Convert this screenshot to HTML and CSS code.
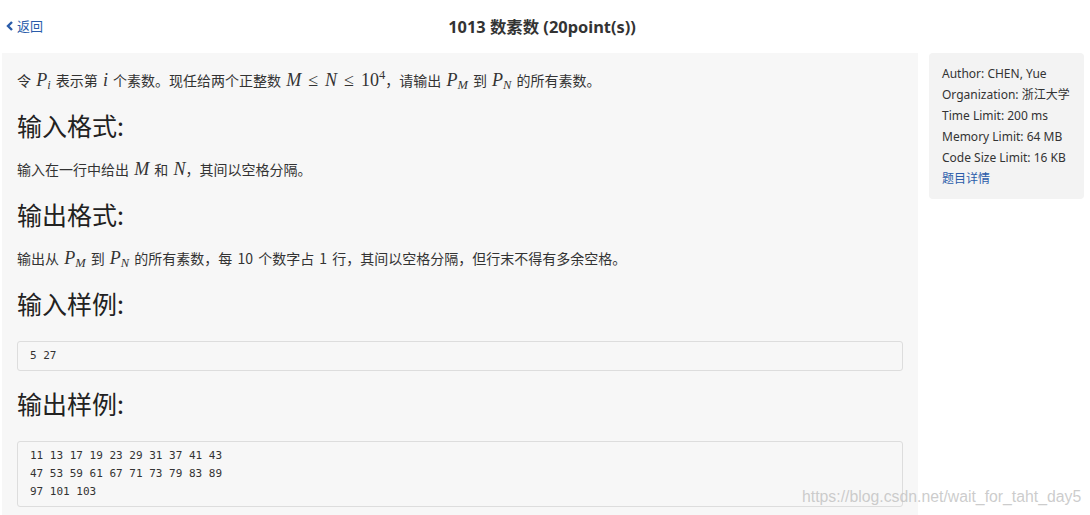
FILE: index.html
```html
<!DOCTYPE html>
<html lang="zh">
<head>
<meta charset="utf-8">
<link rel="stylesheet" href="styles.css">
</head>
<body>
<header class="topbar">
  <a class="back" href="#"><svg class="chev" width="8" height="10" viewBox="0 0 8 10"><path d="M6 1 L2 5 L6 9" fill="none" stroke="#2a5caa" stroke-width="2.4"/></svg>返回</a>
  <h1 class="title">1013 数素数 (20point(s))</h1>
</header>
<div class="layout">
  <main class="problem">
    <p class="text">令 <i class="m">P<sub>i</sub></i> 表示第 <i class="m">i</i> 个素数。现任给两个正整数 <i class="m">M</i><span class="op">≤</span><i class="m">N</i><span class="op">≤</span><span class="mn">10<sup>4</sup></span>，请输出 <i class="m">P<sub>M</sub></i> 到 <i class="m">P<sub>N</sub></i> 的所有素数。</p>
    <h2 class="head">输入格式:</h2>
    <p class="text">输入在一行中给出 <i class="m">M</i> 和 <i class="m">N</i>，其间以空格分隔。</p>
    <h2 class="head">输出格式:</h2>
    <p class="text">输出从 <i class="m">P<sub>M</sub></i> 到 <i class="m">P<sub>N</sub></i> 的所有素数，每 10 个数字占 1 行，其间以空格分隔，但行末不得有多余空格。</p>
    <h2 class="head">输入样例:</h2>
    <pre class="code">5 27</pre>
    <h2 class="head">输出样例:</h2>
    <pre class="code">11 13 17 19 23 29 31 37 41 43
47 53 59 61 67 71 73 79 83 89
97 101 103</pre>
  </main>
  <aside class="side">
    <div class="info">
      <div>Author: CHEN, Yue</div>
      <div>Organization: 浙江大学</div>
      <div>Time Limit: 200 ms</div>
      <div>Memory Limit: 64 MB</div>
      <div>Code Size Limit: 16 KB</div>
      <a class="detail" href="#">题目详情</a>
    </div>
  </aside>
</div>
<div class="watermark">https://blog.csdn.net/wait_for_taht_day5</div>
</body>
</html>
```
FILE: styles.css
```css
* { box-sizing: border-box; }
html, body { margin: 0; padding: 0; }
body {
  width: 1090px;
  height: 515px;
  overflow: hidden;
  background: #fff;
  font-family: "Noto Sans", "Noto Sans CJK SC", sans-serif;
  color: #333;
  position: relative;
}
.topbar {
  height: 53px;
  position: relative;
  display: flex;
  align-items: center;
  justify-content: center;
  padding-right: 6px;
}
.back {
  position: absolute;
  left: 6px;
  top: 17px;
  display: flex;
  align-items: center;
  gap: 3px;
  font-size: 13px;
  color: #2a5caa;
  text-decoration: none;
  line-height: 18px;
}
.title {
  margin: 0;
  font-size: 16.4px;
  font-weight: 700;
  color: #333;
  line-height: 20px;
}
.layout {
  display: flex;
  gap: 11px;
  padding-left: 2px;
}
.problem {
  width: 916px;
  background: #f7f7f7;
  padding: 15px 15px 20px 15px;
  min-height: 470px;
}
.text {
  margin: 0;
  font-family: "Noto Sans CJK SC", "Noto Sans", sans-serif;
  font-size: 14px;
  line-height: 24px;
  color: #333;
  word-spacing: 2px;
}
.m {
  font-family: "Liberation Serif", serif;
  font-size: 18px;
  font-style: italic;
}
.m sub {
  font-size: 12.5px;
  vertical-align: -3px;
  line-height: 0;
}
.op, .mn {
  font-family: "Liberation Serif", serif;
  font-size: 18px;
  color: #333;
}
.op { margin: 0 7px; }
.mn sup {
  font-size: 12.5px;
  vertical-align: 7px;
  line-height: 0;
}
.head {
  margin: 16px 0 15px 0;
  font-family: "Noto Sans CJK SC", sans-serif;
  font-size: 25px;
  font-weight: 400;
  line-height: 34px;
  color: #222;
}
.code {
  margin: 21px 0 0 0;
  background: #f7f7f7;
  border: 1px solid #ddd;
  border-radius: 3px;
  padding: 5px 12px 5px 12px;
  font-family: "DejaVu Sans Mono", monospace;
  font-size: 11px;
  line-height: 18px;
  color: #333;
}
.code + .head { margin-top: 15px; }
.side { width: 155px; }
.info {
  background: #f3f3f3;
  border-radius: 4px;
  padding: 10px 13px 10px 13px;
  font-size: 12px;
  line-height: 21px;
  color: #333;
}
.detail { color: #2a5caa; text-decoration: none; }
.watermark {
  position: absolute;
  left: 802px;
  top: 488px;
  font-family: "Liberation Sans", sans-serif;
  font-size: 15.8px;
  color: rgba(195,195,195,0.85);
}
```
